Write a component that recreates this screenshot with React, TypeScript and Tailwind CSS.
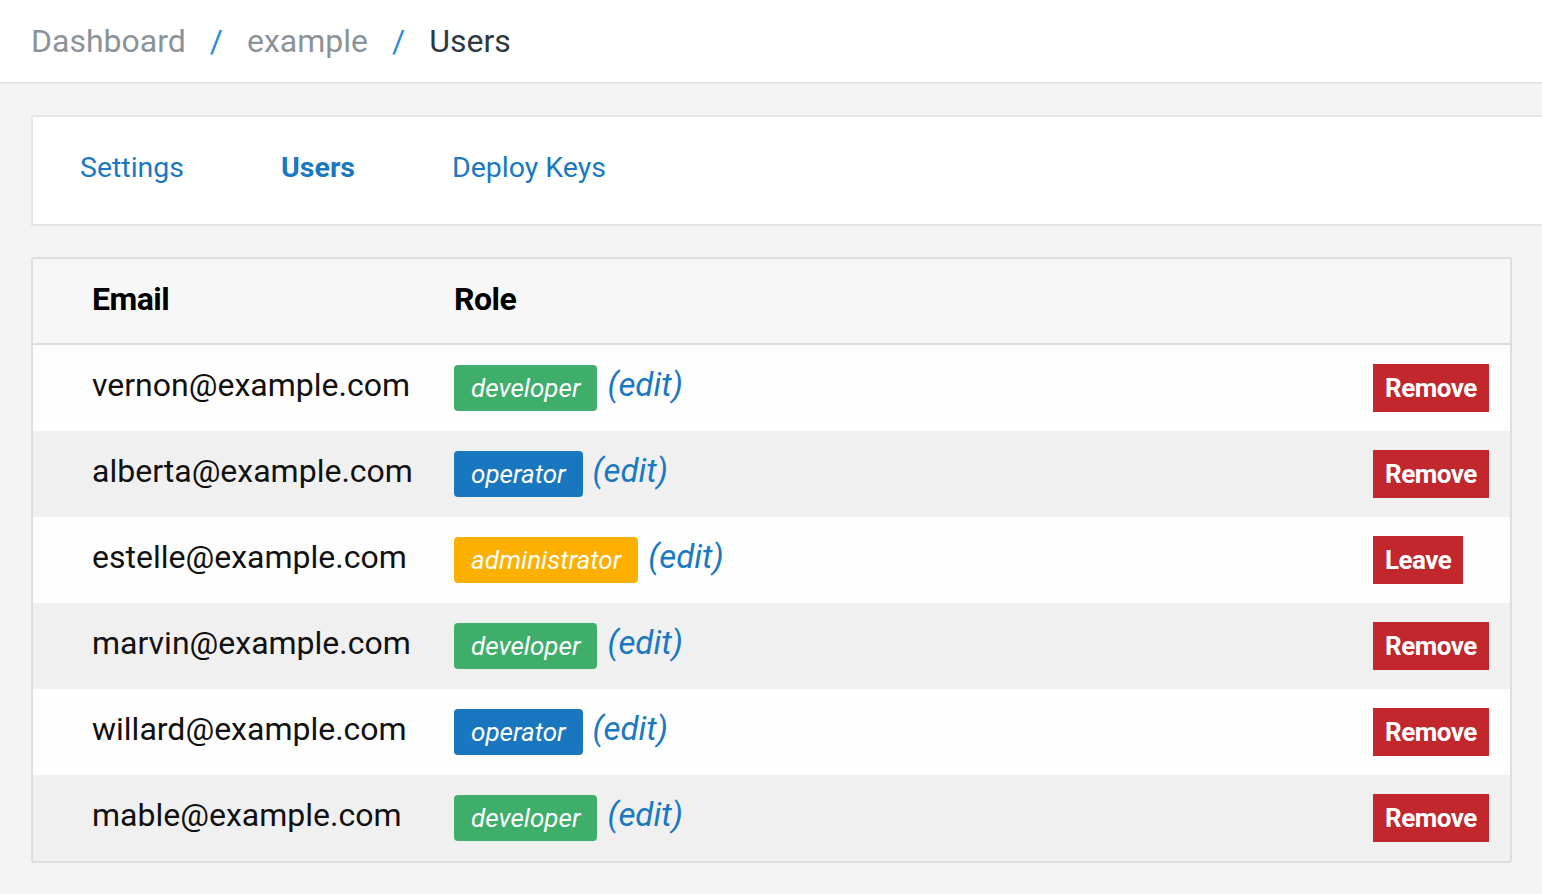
const users = [
  { email: "vernon@example.com", role: "developer", action: "Remove" },
  { email: "alberta@example.com", role: "operator", action: "Remove" },
  { email: "estelle@example.com", role: "administrator", action: "Leave" },
  { email: "marvin@example.com", role: "developer", action: "Remove" },
  { email: "willard@example.com", role: "operator", action: "Remove" },
  { email: "mable@example.com", role: "developer", action: "Remove" },
];

const roleColors: Record<string, string> = {
  developer: "bg-[#40ae6b]",
  operator: "bg-[#1877bf]",
  administrator: "bg-[#fdb000]",
};

export default function App() {
  return (
    <div className="min-h-screen bg-[#f4f4f4] font-['Roboto',sans-serif] overflow-hidden">
      {/* Breadcrumb */}
      <header className="h-[84px] bg-white border-b-2 border-[#e3e3e3] flex items-center pl-[31px] text-[32px]">
        <span className="text-[#8b9399]">Dashboard</span>
        <span className="text-[#2b8ad6] mx-[24px]">/</span>
        <span className="text-[#8b9399]">example</span>
        <span className="text-[#2b8ad6] mx-[24px]">/</span>
        <span className="text-[#2d3844]">Users</span>
      </header>

      <div className="pl-[31px] pt-[31px]">
        {/* Tabs */}
        <nav className="h-[111px] -mr-[40px] bg-white border-2 border-[#e6e6e6] flex items-center pl-[47px] gap-[97px] text-[28.5px] text-[#1a78c2] pb-[4px]">
          <span>Settings</span>
          <span className="font-bold">Users</span>
          <span>Deploy Keys</span>
        </nav>

        {/* Users table */}
        <div className="mt-[31px] w-[1481px] border-2 border-[#dedede] rounded-[3px] overflow-hidden">
          <div className="h-[86px] bg-[#f7f7f7] border-b-2 border-[#dedede] grid grid-cols-[421px_1fr] items-center text-[32px] font-bold text-black tracking-[-0.5px] pb-[4px]">
            <span className="pl-[59px]">Email</span>
            <span>Role</span>
          </div>
          {users.map((u, i) => (
            <div
              key={u.email}
              className={`h-[86px] grid grid-cols-[421px_1fr_137px] items-center ${
                i % 2 === 0 ? "bg-[#fdfdfd]" : "bg-[#f0f0f0]"
              }`}
            >
              <span className="pl-[59px] text-[32px] text-[#111] pb-[6px]">{u.email}</span>
              <div className="flex items-center gap-[10px]">
                <span
                  className={`${roleColors[u.role]} h-[46px] rounded-[4px] px-[17px] flex items-center text-white italic text-[26px]`}
                >
                  {u.role}
                </span>
                <span className="text-[#1a78c2] italic text-[33px] pb-[6px]">(edit)</span>
              </div>
              <div className="flex">
                <button className="h-[48px] bg-[#c1272d] text-white font-bold text-[26px] px-[12px] tracking-[-0.5px] flex items-center">
                  {u.action}
                </button>
              </div>
            </div>
          ))}
        </div>

        <div className="mt-[31px] h-[40px] -mr-[40px] bg-white border-t-2 border-[#e6e6e6]" />
      </div>
    </div>
  );
}
